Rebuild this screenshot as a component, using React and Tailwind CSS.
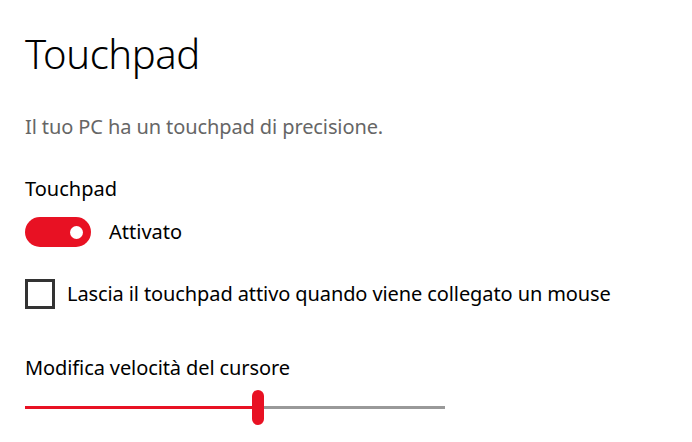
export default function App() {
  return (
    <div className="w-[692px] h-[442px] bg-white overflow-hidden pl-[25px] text-black" style={{ fontFamily: '"Noto Sans", "Open Sans", sans-serif' }}>
      <h1 className="text-[40px] font-light leading-[50px] mt-[29px] tracking-[-0.4px]">Touchpad</h1>
      <p className="text-[20px] leading-[28px] mt-[34px] text-[#666666] tracking-[-0.1px]">Il tuo PC ha un touchpad di precisione.</p>
      <div className="text-[20px] leading-[28px] mt-[34px]">Touchpad</div>
      <div className="flex items-center mt-[14px] h-[30px]">
        <div className="w-[66px] h-[30px] rounded-full bg-[#e81123] flex items-center justify-end pr-[8px]">
          <div className="w-[13px] h-[13px] rounded-full bg-white" />
        </div>
        <span className="ml-[18px] text-[20px] leading-[28px]">Attivato</span>
      </div>
      <div className="flex items-center mt-[32px] h-[30px]">
        <div className="w-[30px] h-[30px] border-[3px] border-[#333333] bg-white" />
        <span className="ml-[12px] text-[20px] leading-[28px] tracking-[-0.1px]">Lascia il touchpad attivo quando viene collegato un mouse</span>
      </div>
      <div className="text-[20px] leading-[28px] mt-[45px] tracking-[-0.1px]">Modifica velocità del cursore</div>
      <div className="relative w-[420px] h-[35px] mt-[8px] flex items-center">
        <div className="h-[3px] w-[233px] bg-[#e81123]" />
        <div className="h-[3px] flex-1 bg-[#999999]" />
        <div className="absolute left-[227px] top-0 w-[12px] h-[35px] rounded-full bg-[#e81123]" />
      </div>
    </div>
  );
}
